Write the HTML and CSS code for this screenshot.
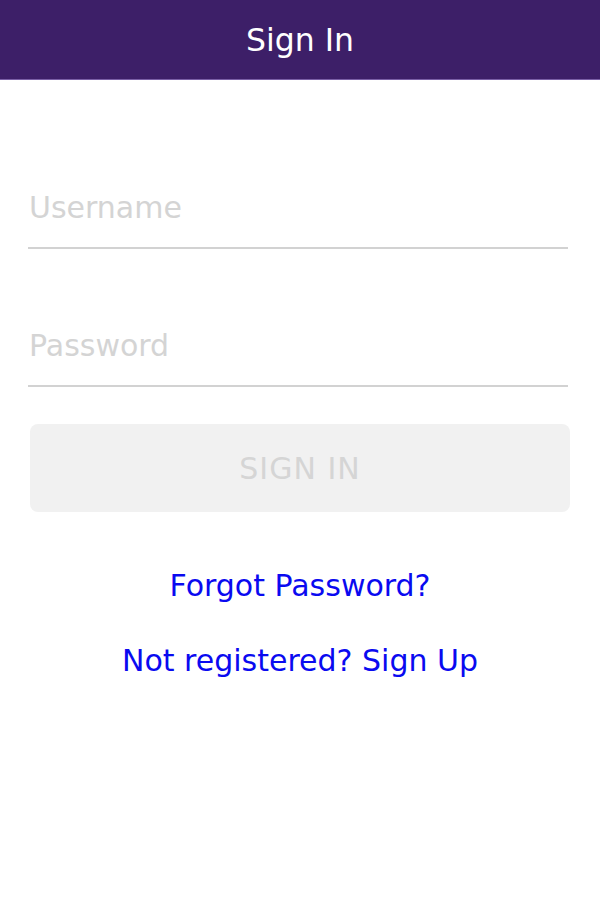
FILE: index.html
```html
<!DOCTYPE html>
<html>
<head>
<meta charset="utf-8">
<link rel="stylesheet" href="styles.css">
</head>
<body>
<header class="topbar">Sign In</header>
<main class="form">
  <input class="field" type="text" placeholder="Username">
  <input class="field" type="password" placeholder="Password">
  <button class="submit" disabled>SIGN IN</button>
  <a class="link link-forgot" href="#">Forgot Password?</a>
  <a class="link link-signup" href="#">Not registered? Sign Up</a>
</main>
</body>
</html>
```
FILE: styles.css
```css
* { box-sizing: border-box; }
html, body { margin: 0; padding: 0; background: #ffffff; }
body { font-family: "DejaVu Sans", sans-serif; width: 600px; }

.topbar {
  height: 80px;
  background: #3d1f68;
  color: #ffffff;
  font-size: 31.5px;
  display: flex;
  align-items: center;
  justify-content: center;
  border-bottom: 1px solid #7a5fa6;
}

.form {
  display: flex;
  flex-direction: column;
  padding: 0 32px 0 28px;
}

.field {
  font-family: "DejaVu Sans", sans-serif;
  font-size: 30px;
  border: none;
  border-bottom: 2px solid #d2d2d2;
  outline: none;
  padding: 0 0 16px 1px;
  height: 65px;
  color: #333;
  background: transparent;
}
.field:first-child { margin-top: 104px; }
.field + .field { margin-top: 73px; }
.field::placeholder { color: #d4d4d4; }

.submit {
  margin: 37px -2px 0 2px;
  height: 88px;
  border: none;
  border-radius: 8px;
  background: #f1f1f1;
  color: #d5d5d5;
  font-family: "DejaVu Sans", sans-serif;
  font-size: 30px;
  letter-spacing: 1px;
}

.link {
  align-self: center;
  color: #0a0af0;
  text-decoration: none;
  font-size: 30px;
  line-height: 36px;
}
.link-forgot { margin-top: 56px; margin-left: 4px; }
.link-signup { margin-top: 39px; margin-left: 4px; }
```
